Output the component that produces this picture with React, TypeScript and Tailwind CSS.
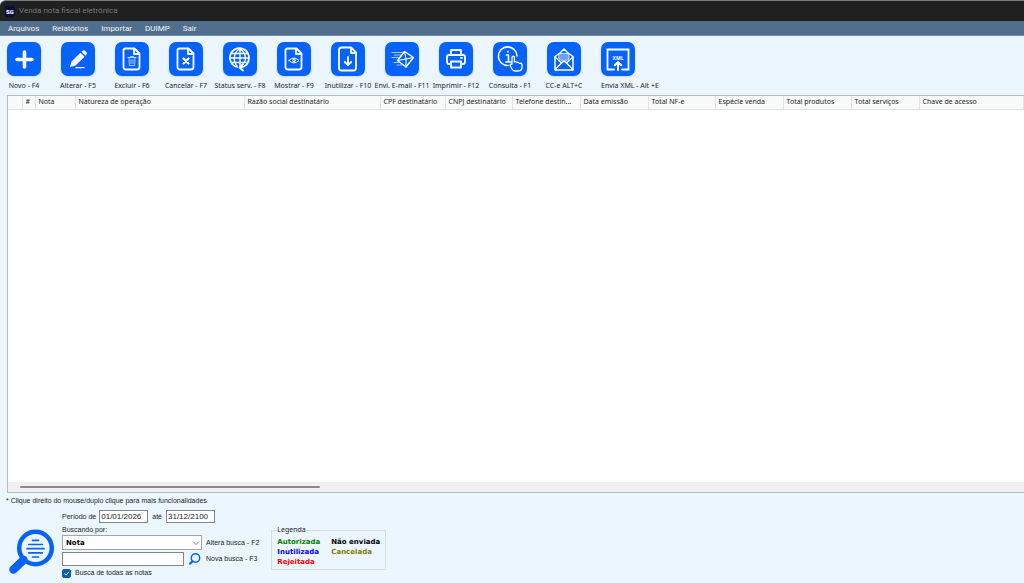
import { useState } from "react";
import type { ReactNode } from "react";

const menus = ["Arquivos", "Relatórios", "Importar", "DUIMP", "Sair"];

const columns = [
  { label: "", width: "w-[14px]" },
  { label: "#", width: "w-[13px]" },
  { label: "Nota", width: "w-[40px]" },
  { label: "Natureza de operação", width: "w-[169px]" },
  { label: "Razão social destinatário", width: "w-[136px]" },
  { label: "CPF destinatário", width: "w-[65px]" },
  { label: "CNPJ destinatário", width: "w-[67px]" },
  { label: "Telefone destin...", width: "w-[68px]" },
  { label: "Data emissão", width: "w-[68px]" },
  { label: "Total NF-e", width: "w-[67px]" },
  { label: "Espécie venda", width: "w-[68px]" },
  { label: "Total produtos", width: "w-[68px]" },
  { label: "Total serviços", width: "w-[68px]" },
  { label: "Chave de acesso", width: "" },
];

const page = (
  <path d="M10.500 6.500h9l5 5V25q0 2.500-2.500 2.500H11Q8.500 27.500 8.500 25V8.500q0-2 2-2zM19 6.500V12h5.500" />
);

const actions: { label: string; icon: ReactNode; wide?: boolean }[] = [
  { label: "Novo - F4", icon: <path d="M17.500 10v15M10 17.500h15" strokeWidth="3.600" /> },
  {
    label: "Alterar - F5",
    icon: (
      <g fill="white" stroke="none">
        <path d="M9 25l1.500-5.500 9-8.700 4 4-9 8.700zM20.500 9.800l1.300-1.200q1-.9 2 0l1.800 1.800q1 1 0 2l-1.200 1.300z" />
        <path d="M14.500 25h9v1.200h-9z" />
      </g>
    ),
  },
  {
    label: "Excluir - F6",
    icon: (
      <>
        {page}
        <path d="M13 15.500h8M15.500 15.500v-1h3v1M14 15.500l.4 8h5.200l.4-8M16 17.500v4M18 17.500v4" strokeWidth="0.800" strokeOpacity="0.850" />
      </>
    ),
  },
  {
    label: "Cancelar - F7",
    icon: (
      <>
        {page}
        <path d="M14.500 16.500l5 5M19.500 16.500l-5 5" strokeWidth="2.200" />
      </>
    ),
  },
  {
    label: "Status serv. - F8",
    icon: (
      <>
        <path d="M14 25A9.600 9.600 0 1 1 25.500 19" />
        <path d="M17 6.500v17M14 24c-4-5-4-13 3-17.500 5 4 6.500 9 4.500 14M9 11.500h16M7.500 16h18.500M9 20.500h14" strokeWidth="1.400" />
        <path d="M25.500 19q-1.500 5.500-8 6.500M20 22l-3.500 3.500L20 28.500" />
      </>
    ),
  },
  {
    label: "Mostrar - F9",
    icon: (
      <>
        {page}
        <path d="M12 18.500q5-5 10 0-5 5-10 0z" strokeWidth="1" />
        <circle cx="17" cy="18.500" r="1.300" strokeWidth="1" />
      </>
    ),
  },
  {
    label: "Inutilizar - F10",
    icon: (
      <>
        <path d="M10.500 5.500h9.500l5 5V26q0 2.500-2.500 2.500h-12Q8 28.500 8 26V8q0-2.500 2.500-2.500zM20 5.500v5.500h5" />
        <path d="M17 15v8M13.800 20l3.200 3.200 3.200-3.200" />
      </>
    ),
  },
  {
    label: "Envi. E-mail - F11",
    icon: (
      <>
        <path d="M12.500 18.500L19.500 9.500l9 6L21 25z" strokeWidth="1.400" />
        <path d="M19.500 9.500l1.500 7.500 7.500-1.500M12.500 18.500L21 17v8" strokeWidth="1.100" />
        <path d="M7 10.500h10.500M9.500 13h6M7 15.500h6.500M9 20.500h4.500M12 23h5" strokeWidth="0.800" strokeOpacity="0.800" />
      </>
    ),
  },
  {
    label: "Imprimir - F12",
    icon: (
      <>
        <path d="M12 13V8h10v5M12 22h-2q-2 0-2-2v-5q0-2 2-2h14q2 0 2 2v5q0 2-2 2h-2" />
        <path d="M12 19.500h10V25.500H12zM22 16h1" />
      </>
    ),
  },
  {
    label: "Consulta - F1",
    icon: (
      <>
        <path d="M15 23.500A9.300 9.300 0 1 1 24 14" strokeWidth="1.600" />
        <path d="M13.500 13h2v7M13 20h5M15 9.500v.300" strokeWidth="1.700" />
        <path
          d="M19 22v-6.500q0-1.300 1.200-1.300t1.200 1.300V20l1-.500 1.600 1 1-.300 1.500 1.200 1.500-.200 1 1.300v2.500q0 4-4 4H22q-2 0-3-2l-2-3.500q0-1.500 2-1.500z"
          fill="#0563fb"
          strokeWidth="1.300"
        />
      </>
    ),
  },
  {
    label: "CC-e ALT+C",
    icon: (
      <g strokeWidth="1.500">
        <path d="M8 14.500V28h18V14.500M8 14.500l5-3.500M26 14.500L21 11M13 11l4-4 4 4" />
        <path d="M8 15l6.500 6L8 27.500M26 15l-6.500 6 6.500 6.500M14.500 21l2.500-2 2.500 2" />
        <path d="M12 11.500h10V17l-4.500 2.500h-1L12 17z" fill="white" fillOpacity="0.400" strokeWidth="0.700" />
      </g>
    ),
  },
  {
    label: "Envia XML - Alt +E",
    wide: true,
    icon: (
      <>
        <path d="M13 27.500H6.500v-20h21v20H21" strokeLinejoin="miter" />
        <path d="M17 28v-7M13.800 23.200L17 20l3.200 3.200" strokeWidth="2" />
        <text x="17" y="18" textAnchor="middle" fontSize="5" fontWeight="bold" fill="white" stroke="none">
          XML
        </text>
      </>
    ),
  },
];

function Action({ label, icon, wide }: { label: string; icon: ReactNode; wide?: boolean }) {
  return (
    <button
      type="button"
      className={`flex w-[34px] flex-col gap-1 whitespace-nowrap ${wide ? "items-start" : "items-center"}`}
    >
      <svg
        viewBox="0 0 34 34"
        className="size-[34px] shrink-0 rounded-[7px] bg-[#0563fb] shadow-sm"
        fill="none"
        stroke="white"
        strokeWidth="1.800"
        strokeLinecap="round"
        strokeLinejoin="round"
        aria-hidden="true"
      >
        {icon}
      </svg>
      <span className="leading-[12px]">{label}</span>
    </button>
  );
}

export default function App() {
  const [from, setFrom] = useState("01/01/2026");
  const [to, setTo] = useState("31/12/2100");
  const [query, setQuery] = useState("");
  const [all, setAll] = useState(true);

  return (
    <div className="flex min-h-screen flex-col bg-[#ebf6ff] font-['Noto_Sans',sans-serif] text-[7px] text-[#1c1c1c]">
      <header className="flex h-[21px] items-center gap-1 rounded-tl-md border-t border-[#777c80] bg-[#202020] px-[5px] font-['Roboto',sans-serif]">
        <span className="flex h-[11px] w-[10px] items-center justify-center rounded-[1px] bg-[#06103c] text-[6px] font-black text-white">
          SG
        </span>
        <h1 className="text-[8px] text-[#777777]">Venda nota fiscal eletrônica</h1>
      </header>

      <nav className="flex h-[15px] items-center gap-[13px] border-b border-[#718baa] bg-[#516f8d] px-2 pt-px font-['Roboto',sans-serif] text-[8px] text-[#f2f5f8]">
        {menus.map((m) => (
          <button key={m} type="button">
            {m}
          </button>
        ))}
      </nav>

      <div className="flex gap-5 px-[7px] pt-[6px] pb-[3px]">
        {actions.map((a) => (
          <Action key={a.label} {...a} />
        ))}
      </div>

      <main className="ml-[7px] flex flex-1 flex-col border border-r-0 border-[#b4bdc4] bg-white">
        <table className="w-full table-fixed border-collapse bg-[#f8faf9]">
          <thead>
            <tr className="h-[13px]">
              {columns.map((c, i) => (
                <th
                  key={i}
                  className={`${c.width} border-r border-b border-[#dfe3e5] pl-[3px] text-left leading-[12px] font-normal whitespace-nowrap`}
                >
                  {c.label}
                </th>
              ))}
            </tr>
          </thead>
        </table>
        <div className="mt-auto flex h-[10px] items-center bg-[#f0f0f0] px-3">
          <div className="h-[2px] w-[300px] rounded bg-[#8a8a8a]" />
        </div>
      </main>

      <footer className="px-[6px] pb-[5px] font-['Liberation_Sans',sans-serif] leading-[10px]">
        <p className="pt-[3px]">* Clique direito do mouse/duplo clique para mais funcionalidades</p>
        <div className="flex items-end gap-2 pt-1">
          <svg viewBox="0 0 48 48" className="mb-[2px] size-12 shrink-0" fill="none" stroke="#0563fb" aria-hidden="true">
            <circle cx="29.500" cy="20" r="16.300" strokeWidth="4.500" />
            <path d="M17.500 32L7.500 41.500" strokeWidth="8.500" strokeLinecap="round" />
            <path d="M26.500 12.300h6M22.800 16.500h13.500M21 20.700h17M22.800 24.800h13.500M26.500 29h6" strokeWidth="1.700" strokeLinecap="round" />
          </svg>
          <div>
            <div className="flex items-center">
              <label htmlFor="from" className="pr-[3px]">
                Período de
              </label>
              <input
                id="from"
                value={from}
                onChange={(e) => setFrom(e.target.value)}
                className="h-[13px] w-[49px] border border-[#858585] bg-white px-px text-[8px]"
              />
              <label htmlFor="to" className="px-1">
                até
              </label>
              <input
                id="to"
                value={to}
                onChange={(e) => setTo(e.target.value)}
                className="h-[13px] w-[49px] border border-[#858585] bg-white px-px text-[8px]"
              />
            </div>
            <label htmlFor="field" className="block pt-[2px]">
              Buscando por:
            </label>
            <div className="flex items-center gap-1">
              <div className="relative w-[140px]">
                <select
                  id="field"
                  className="block h-[15px] w-full appearance-none border border-[#a0a5a9] bg-white px-[3px] font-['DejaVu_Sans',sans-serif] font-bold text-black"
                >
                  <option>Nota</option>
                </select>
                <svg
                  viewBox="0 0 8 8"
                  className="pointer-events-none absolute top-1 right-[2px] size-2"
                  fill="none"
                  stroke="#777777"
                  strokeWidth="0.900"
                  aria-hidden="true"
                >
                  <path d="M1 2.500l3 3 3-3" />
                </svg>
              </div>
              <span>Altera busca - F2</span>
            </div>
            <div className="flex items-center gap-1 pt-[2px]">
              <input
                aria-label="Texto da busca"
                value={query}
                onChange={(e) => setQuery(e.target.value)}
                className="h-[14px] w-[122px] border border-[#858585] bg-white px-[3px]"
              />
              <button type="button" aria-label="Nova busca">
                <svg viewBox="0 0 14 14" className="size-[14px]" fill="none" stroke="#0563fb" aria-hidden="true">
                  <circle cx="7.500" cy="6" r="4.200" strokeWidth="1.500" />
                  <path d="M4.500 9.200L2 11.800" strokeWidth="2" strokeLinecap="round" />
                </svg>
              </button>
              <span>Nova busca - F3</span>
            </div>
            <label className="flex items-center gap-1 pt-[2px]">
              <span className="relative size-[9px]">
                <input
                  type="checkbox"
                  checked={all}
                  onChange={(e) => setAll(e.target.checked)}
                  className="block size-[9px] appearance-none rounded-[2px] border border-[#0b5eae] bg-white checked:bg-[#0b5eae]"
                />
                {all && (
                  <svg
                    viewBox="0 0 9 9"
                    className="pointer-events-none absolute inset-0"
                    fill="none"
                    stroke="white"
                    strokeWidth="0.900"
                    aria-hidden="true"
                  >
                    <path d="M2.500 4.500L4 6l3-3" />
                  </svg>
                )}
              </span>
              Busca de todas as notas
            </label>
          </div>
          <fieldset className="mb-2 ml-1 w-[114px] border border-[#d5dde3] px-[5px] pb-[2px] font-['DejaVu_Sans',sans-serif] font-bold whitespace-nowrap">
            <legend className="font-['Noto_Sans',sans-serif] leading-[8px] font-normal">Legenda</legend>
            <div className="flex gap-[11px] pt-[3px]">
              <ul>
                <li className="text-[#008000]">Autorizada</li>
                <li className="text-[#0000ff]">Inutilizada</li>
                <li className="text-[#ff0000]">Rejeitada</li>
              </ul>
              <ul>
                <li className="text-black">Não enviada</li>
                <li className="text-[#808000]">Cancelada</li>
              </ul>
            </div>
          </fieldset>
        </div>
      </footer>
    </div>
  );
}
